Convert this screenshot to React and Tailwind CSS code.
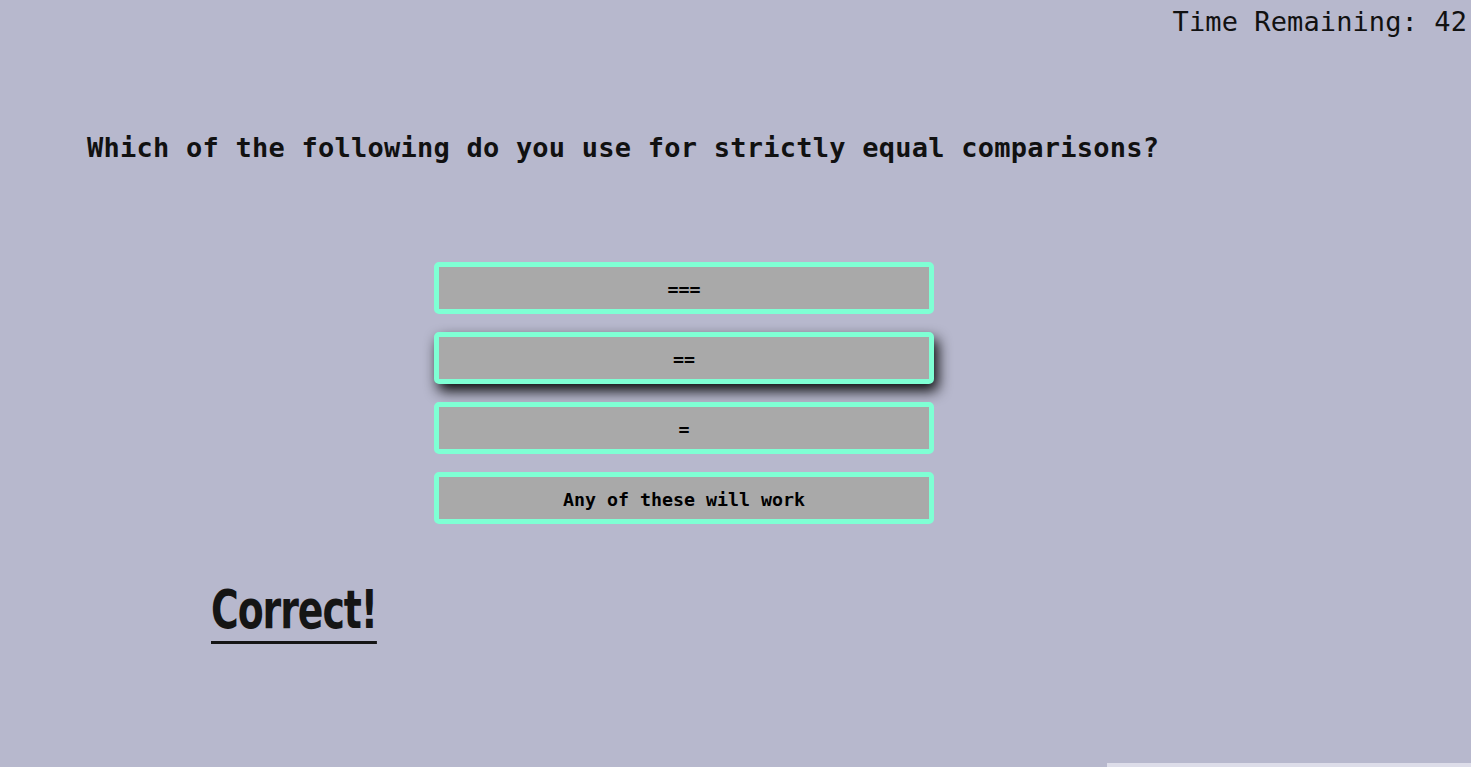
export default function App() {
  const answers = ["===", "==", "=", "Any of these will work"];
  return (
    <div className="relative h-[767px] w-full overflow-hidden bg-[#b7b8cd] text-[#111]" style={{ fontFamily: '"DejaVu Sans Mono", "Liberation Mono", monospace' }}>
      <div className="flex justify-end pr-[4px] pt-[5px]">
        <span className="text-[27px] leading-[34px] tracking-[0.1px]">Time Remaining: 42</span>
      </div>
      <h1 className="ml-[87px] mt-[92px] text-[27px] font-bold leading-[34px] tracking-[0.24px]">
        Which of the following do you use for strictly equal comparisons?
      </h1>
      <div className="ml-[434px] mt-[97px] flex w-[500px] flex-col gap-[18px]">
        {answers.map((a, i) => (
          <button
            key={a}
            className={`h-[52px] w-full rounded-[5px] border-[5px] border-[#7fffd4] bg-[#a9a9a9] pt-[3px] text-[18.3px] font-bold text-black ${i === 1 ? "shadow-[4px_7px_14px_rgba(0,0,0,0.95)]" : ""}`}
          >
            {a}
          </button>
        ))}
      </div>
      <div className="ml-[211px] mt-[58px]">
        <span
          className="inline-block origin-left scale-x-[0.70] border-b-[3px] border-[#151515] pb-[3px] text-[54px] font-bold leading-[56px] text-[#151515]"
          style={{ fontFamily: '"DejaVu Sans", sans-serif', letterSpacing: "-1.5px" }}
        >
          Correct!
        </span>
      </div>
      <div className="absolute bottom-0 right-0 h-[4px] w-[364px] bg-[#dddde9]" />
    </div>
  );
}
